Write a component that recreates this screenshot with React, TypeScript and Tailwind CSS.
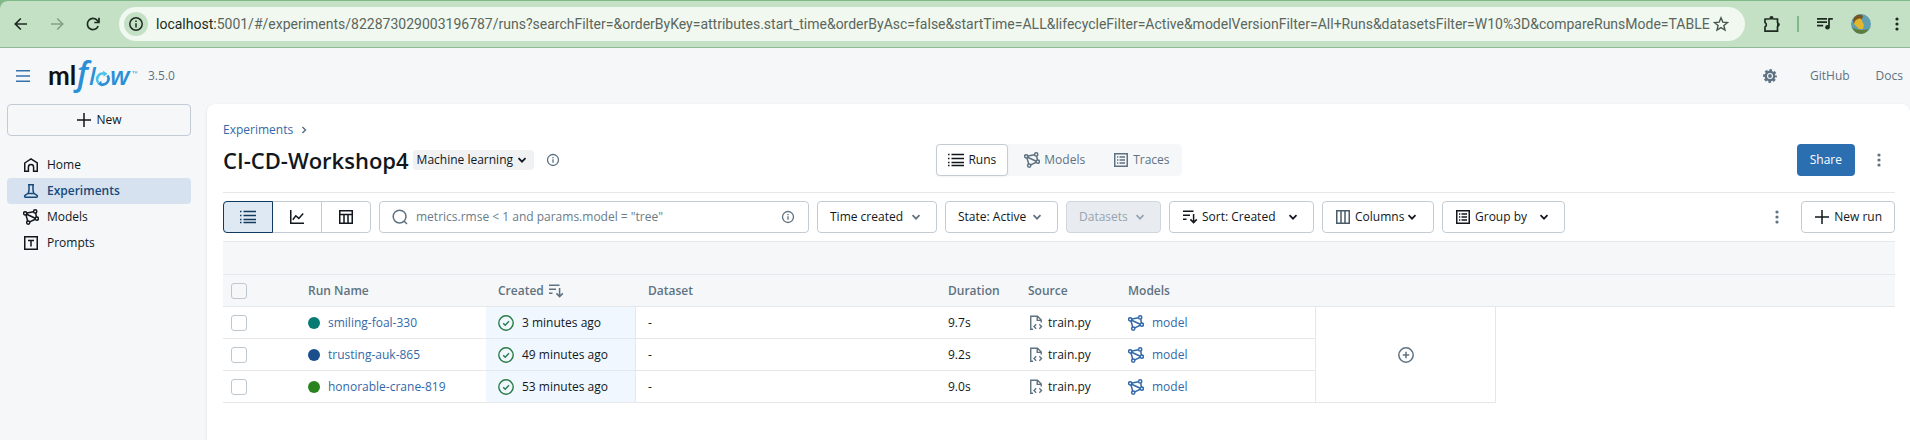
import React from 'react';

type IconProps = { className?: string };

function Svg({ className = 'size-4', children, box = 16 }: { className?: string; children: React.ReactNode; box?: number }) {
  return (
    <svg
      className={`shrink-0 ${className}`}
      viewBox={`0 0 ${box} ${box}`}
      fill="none"
      stroke="currentColor"
      strokeWidth="1.5"
      aria-hidden="true"
    >
      {children}
    </svg>
  );
}

const PlusIcon = ({ className }: IconProps) => (
  <Svg className={className}><path d="M8 1v14M1 8h14" /></Svg>
);
const HomeIcon = () => (
  <Svg><path d="M1.75 6 8 1.8 14.25 6v8.25H10.6V10.2a2.6 2.6 0 0 0-5.2 0v4.05H1.75z" /></Svg>
);
const BeakerIcon = () => (
  <Svg><path d="M5 1.75h6M6 1.75V7.5L5.2 10.3 2 12.3a1.1 1.1 0 0 0 .6 1.95h10.8a1.1 1.1 0 0 0 .6-1.95l-3.2-2L10 7.5V1.75M4.6 10.5h6.8" /></Svg>
);
const ModelsIcon = ({ className }: IconProps) => (
  <Svg className={className}>
    <circle cx="2.2" cy="4.3" r="1.6" />
    <circle cx="12.2" cy="2.4" r="1.6" />
    <circle cx="13.8" cy="9.6" r="1.6" />
    <circle cx="5.2" cy="13.6" r="1.6" />
    <path d="M3.8 4 10.6 2.7M12.6 4l.9 4M12.3 10.3l-5.6 2.6M2.9 5.8l1.8 6.2M3.6 5.2l8.7 4" />
  </Svg>
);
const PromptIcon = () => (
  <Svg><path d="M1.75 1.75h12.5v12.5H1.75zM5 5.4h6M8 5.4v6" /></Svg>
);
const ListIcon = () => (
  <Svg><path d="M3.5 2.5H16M3.5 6.5H16M3.5 10.5H16M3.5 13.5H16M0 2.5h1.5M0 6.5h1.5M0 10.5h1.5M0 13.5h1.5" /></Svg>
);
const ChartIcon = () => (
  <Svg><path d="M1.75 1v13.25H15M3.8 10.8l3-4 3 2.6 4.4-4.8" /></Svg>
);
const TableIcon = () => (
  <Svg><path d="M1.75 1.75h12.5v12.5H1.75zM1.75 5.6h12.5M6 5.6v8.6M10 5.6v8.6" /></Svg>
);
const ColumnsIcon = () => (
  <Svg><path d="M1.75 1.75h12.5v12.5H1.75zM6 1.75v12.5M10 1.75v12.5" /></Svg>
);
const ListBorderIcon = () => (
  <Svg>
    <path d="M1.75 1.75h12.5v12.5H1.75z" />
    <path d="M6.5 5H12M6.5 8H12M6.5 11H12M4 5h1.3M4 8h1.3M4 11h1.3" strokeWidth="1.3" />
  </Svg>
);
const SortIcon = () => (
  <Svg><path d="M1 2.25h10.5M1 6.25h7M1 10.25h3.5M11.6 5v8.6M8.4 10.4l3.2 3.2 3.2-3.2" /></Svg>
);
const ChevronIcon = ({ className }: IconProps) => (
  <Svg className={className}><path d="m4.5 6.2 3.5 3.5 3.5-3.5" strokeWidth="1.7" /></Svg>
);
const InfoIcon = () => (
  <Svg className="size-[14px]">
    <circle cx="8" cy="8" r="6.3" />
    <path d="M8 7.2v4M8 4.6v1.4" />
  </Svg>
);
const FileCodeIcon = () => (
  <Svg>
    <path d="M5 14.25H2.75V1.25H9.5l3.75 3.75V7.5M9.2 1.5v3.9h4M8.2 9.2 6 11.4l2.2 2.3M11.3 9.2l2.2 2.2-2.2 2.3" strokeWidth="1.4" />
  </Svg>
);
const CheckCircleIcon = () => (
  <Svg>
    <circle cx="8" cy="8" r="7.2" strokeWidth="1.4" />
    <path d="m5.2 8.2 2 2 3.8-3.9" strokeWidth="1.4" />
  </Svg>
);
const KebabIcon = ({ className }: IconProps) => (
  <Svg className={className}>
    <g fill="currentColor" stroke="none">
      <circle cx="8" cy="3" r="1.6" />
      <circle cx="8" cy="8" r="1.6" />
      <circle cx="8" cy="13" r="1.6" />
    </g>
  </Svg>
);
const GearIcon = () => (
  <Svg>
    <circle cx="8" cy="8" r="4.2" strokeWidth="2.4" />
    <circle cx="8" cy="8" r="1.9" fill="currentColor" stroke="none" />
    <circle cx="8" cy="8" r="5.8" strokeWidth="2.2" strokeDasharray="2.6 1.955" strokeDashoffset="1.3" />
  </Svg>
);

function MlflowLogo() {
  return (
    <svg className="h-9 w-[92px] overflow-visible" viewBox="0 0 92 36" role="img" aria-label="mlflow">
      <text x="0" y="27" fontFamily="Lato, sans-serif" fontWeight="700" fontSize="26" fill="#111">ml</text>
      <g fontFamily="'Open Sans', sans-serif" fontStyle="italic" fontWeight="600" fill="#2b8fd6">
        <text x="29" y="27" fontSize="32">f</text>
        <text x="41" y="27" fontSize="24">l</text>
        <text x="62" y="27" fontSize="26">w</text>
      </g>
      <g fill="none" strokeWidth="2.6">
        <path d="M50.4 24.6a5.6 5.6 0 0 1 5.4-9" stroke="#4cc3ee" />
        <path d="M59.4 17.6a5.6 5.6 0 0 1-6.4 8.6" stroke="#2b8fd6" />
      </g>
      <path d="m55 12.8 4.6 3-4 3z" fill="#4cc3ee" />
      <path d="m54 28.6-4.6-2.6 3.8-3.2z" fill="#2b8fd6" />
      <path d="M84.5 13.5h2M85.5 13.5v2M87.3 15.5v-2l.8 1 .8-1v2" fill="none" stroke="#2b8fd6" strokeWidth=".5" />
    </svg>
  );
}

function BrowserBar() {
  const url =
    '5001/#/experiments/822873029003196787/runs?searchFilter=&orderByKey=attributes.start_time&orderByAsc=false&startTime=ALL&lifecycleFilter=Active&modelVersionFilter=All+Runs&datasetsFilter=W10%3D&compareRunsMode=TABLE';
  return (
    <div className="bg-[#7fb986] pt-px">
      <div className="flex h-[47px] items-center rounded-tl-lg border-b border-[#8fb894] bg-[#c4e1c5] pl-[13px] pr-[5px] text-[#1f2b21]">
        <button type="button" aria-label="Back" className="mr-5 flex size-4">
          <Svg><path d="M14 8H2.5M7.8 2.5 2.3 8l5.5 5.5" strokeWidth="1.7" /></Svg>
        </button>
        <button type="button" aria-label="Forward" disabled className="mr-5 flex size-4 text-[#86a088]">
          <Svg><path d="M2 8h11.5M8.2 2.5 13.7 8l-5.5 5.5" strokeWidth="1.7" /></Svg>
        </button>
        <button type="button" aria-label="Reload" className="mr-[18px] flex size-4">
          <Svg>
            <path d="M13.2 10A5.6 5.6 0 1 1 12.4 4.5L13.6 6" strokeWidth="1.7" />
            <path d="M14 1.8v4.7H9.3" strokeWidth="1.7" />
          </Svg>
        </button>
        <div className="flex h-[34px] min-w-0 flex-1 items-center rounded-full bg-[#f0f8f0] pl-[5px] pr-4">
          <button type="button" aria-label="Site information" className="mr-2 flex size-6 shrink-0 items-center justify-center rounded-full bg-[#c4e1c5]">
            <Svg>
              <circle cx="8" cy="8" r="6.2" />
              <path d="M8 7.2v4.2M8 4.6v1.5" />
            </Svg>
          </button>
          <label htmlFor="address" className="font-[Roboto,sans-serif] text-[14px] leading-5">localhost:</label>
          <input
            id="address"
            type="text"
            defaultValue={url}
            className="min-w-0 flex-1 bg-transparent font-[Roboto,sans-serif] text-[14px] leading-5 text-[#5b665d] outline-none"
          />
          <button type="button" aria-label="Bookmark" className="flex text-[#4a564c]">
            <Svg><path d="m8 1.8 1.8 4.3 4.7.4-3.6 3 1.1 4.6L8 11.6l-4 2.5 1.1-4.6-3.6-3 4.7-.4z" strokeWidth="1.4" /></Svg>
          </button>
        </div>
        <button type="button" aria-label="Extensions" className="ml-[18px] flex">
          <Svg className="size-[18px]" box={18}>
            <path d="M2 4h4.6M10.4 4h4.1v4.1M14.5 10.9v5.3H2v-4.3a2.5 2.5 0 0 0 0-4.4V3.5" strokeWidth="1.7" />
            <path d="M6.4 4.5V3.2a2.1 2.1 0 0 1 4.2 0v1.3zM14 7.6h1.2a2.1 2.1 0 0 1 0 4.1H14z" fill="currentColor" stroke="none" />
          </Svg>
        </button>
        <span className="ml-4 h-4 w-[2px] bg-[#7fb986]" />
        <button type="button" aria-label="Media controls" className="ml-[18px] flex">
          <Svg>
            <path d="M0 2.8h10M0 6.2h10M0 9.6h6.2M12 10.8V2.8h3.8" strokeWidth="1.7" />
            <circle cx="10.5" cy="11.3" r="2.3" fill="currentColor" stroke="none" />
          </Svg>
        </button>
        <button type="button" aria-label="Profile" className="ml-[18px] flex size-5 overflow-hidden rounded-full">
          <Svg className="size-5" box={20}>
            <g stroke="none">
              <rect width="20" height="20" fill="#5f9fb0" />
              <path d="M2 6C4 0 11-1 12 3l-3 4-6 3z" fill="#7a5320" />
              <path d="M4 7c2-2 4-3 6-2l3 6-1 4-4 0-5-5z" fill="#e0b72c" />
              <path d="M1 13c4 3 8 4 17 2l-5 5H5z" fill="#5f7d3a" />
            </g>
          </Svg>
        </button>
        <button type="button" aria-label="Browser menu" className="ml-[18px] flex">
          <KebabIcon />
        </button>
      </div>
    </div>
  );
}

const navItems = [
  { label: 'Home', icon: <HomeIcon />, active: false },
  { label: 'Experiments', icon: <BeakerIcon />, active: true },
  { label: 'Models', icon: <ModelsIcon />, active: false },
  { label: 'Prompts', icon: <PromptIcon />, active: false },
];

function Sidebar() {
  return (
    <aside className="w-[207px] shrink-0 pl-[7px] pr-4">
      <button type="button" className="flex h-8 w-full items-center justify-center gap-1 rounded border border-[#c3ccd4]">
        <PlusIcon />
        New
      </button>
      <nav className="mt-4 flex flex-col">
        {navItems.map((item) => (
          <a
            key={item.label}
            href={`#/${item.label.toLowerCase()}`}
            className={
              item.active
                ? 'flex h-[26px] items-center gap-2 rounded bg-[#d6e2ef] pl-4 font-semibold text-[#174a7c]'
                : 'flex h-[26px] items-center gap-2 rounded pl-4'
            }
          >
            {item.icon}
            {item.label}
          </a>
        ))}
      </nav>
    </aside>
  );
}

type DropdownProps = {
  label: string;
  text: string;
  icon?: React.ReactNode;
  width: string;
  disabled?: boolean;
  strong?: boolean;
};

function Dropdown({ label, text, icon, width, disabled, strong }: DropdownProps) {
  return (
    <div
      className={`flex h-8 shrink-0 items-center rounded border px-3 ${width} ${
        disabled ? 'border-[#cfd6dd] bg-[#e8ecf0] text-[#97a3af]' : 'border-[#c3ccd4] bg-white'
      }`}
    >
      {icon && <span className="mr-1 flex">{icon}</span>}
      <select aria-label={label} disabled={disabled} className="min-w-0 flex-1 appearance-none bg-transparent opacity-100 outline-none">
        <option>{text}</option>
      </select>
      <ChevronIcon className={strong ? 'size-4' : disabled ? 'size-4 text-[#97a3af]' : 'size-4 text-[#5f7281]'} />
    </div>
  );
}

function TitleRow() {
  return (
    <div className="mt-1 grid grid-cols-[1fr_auto_1fr] items-center border-b border-[#e4e8eb] pb-4">
      <div className="flex items-center">
        <h1 className="text-[22px] leading-7 font-semibold">CI-CD-Workshop4</h1>
        <div className="ml-1 flex h-5 items-center rounded bg-[#f0f1f3] px-1">
          <select aria-label="Experiment type" className="appearance-none bg-transparent outline-none">
            <option>Machine learning</option>
          </select>
          <ChevronIcon />
        </div>
        <button type="button" aria-label="Experiment information" className="ml-3 flex text-[#5f7281]">
          <InfoIcon />
        </button>
      </div>
      <div className="flex h-8 rounded bg-[#f5f7f9] text-[#5f7281]">
        <button type="button" className="flex items-center gap-1 rounded border border-[#c3ccd4] bg-white px-[11px] text-[#11171c] shadow-xs">
          <ListIcon />
          Runs
        </button>
        <button type="button" className="flex items-center gap-1 px-4">
          <ModelsIcon />
          Models
        </button>
        <button type="button" className="flex items-center gap-1 px-3">
          <ListBorderIcon />
          Traces
        </button>
      </div>
      <div className="flex items-center justify-end">
        <button type="button" className="h-8 rounded bg-[#2c6fb1] px-[13px] text-white">Share</button>
        <button type="button" aria-label="More actions" className="ml-2 flex size-8 items-center justify-center text-[#5f7281]">
          <KebabIcon />
        </button>
      </div>
    </div>
  );
}

function Toolbar() {
  return (
    <div className="flex items-center gap-2 py-2">
      <div className="flex h-8 w-[148px] rounded border border-[#c3ccd4]">
        <button type="button" aria-label="List view" className="-my-px -ml-px flex flex-1 items-center justify-center rounded-l border border-[#123a5e] bg-[#dfe9f3] text-[#123a5e]">
          <ListIcon />
        </button>
        <button type="button" aria-label="Chart view" className="flex flex-1 items-center justify-center border-r border-[#c3ccd4]">
          <ChartIcon />
        </button>
        <button type="button" aria-label="Table view" className="flex flex-1 items-center justify-center">
          <TableIcon />
        </button>
      </div>
      <div className="flex h-8 w-[430px] items-center gap-2 rounded border border-[#c3ccd4] pr-[13px] pl-3 text-[#5f7281]">
        <Svg>
          <circle cx="7.6" cy="7.6" r="6.4" />
          <path d="m12 12 3 3" />
        </Svg>
        <input
          type="search"
          aria-label="Search runs"
          placeholder={'metrics.rmse < 1 and params.model = "tree"'}
          className="min-w-0 flex-1 bg-transparent outline-none placeholder:text-[#6b7b89]"
        />
        <InfoIcon />
      </div>
      <Dropdown label="Time" text="Time created" width="w-[120px]" />
      <Dropdown label="State" text="State: Active" width="w-[113px]" />
      <Dropdown label="Datasets" text="Datasets" width="w-[95px]" disabled />
      <Dropdown label="Sort" text="Sort: Created" width="w-[145px]" icon={<SortIcon />} strong />
      <button type="button" aria-haspopup="menu" className="flex h-8 w-[112px] items-center rounded border border-[#c3ccd4] px-3">
        <span className="mr-1 flex text-[#4a5b69]"><ColumnsIcon /></span>
        Columns
        <ChevronIcon />
      </button>
      <Dropdown label="Group by" text="Group by" width="w-[123px]" icon={<ListBorderIcon />} strong />
      <button type="button" aria-label="More run actions" className="ml-auto flex size-8 items-center justify-center text-[#5f7281]">
        <KebabIcon />
      </button>
      <button type="button" className="flex h-8 items-center gap-1 rounded border border-[#c3ccd4] px-3">
        <PlusIcon />
        New run
      </button>
    </div>
  );
}

const runs = [
  { name: 'smiling-foal-330', created: '3 minutes ago', duration: '9.7s', dot: 'bg-[#077a74]' },
  { name: 'trusting-auk-865', created: '49 minutes ago', duration: '9.2s', dot: 'bg-[#1a4f8b]' },
  { name: 'honorable-crane-819', created: '53 minutes ago', duration: '9.0s', dot: 'bg-[#2b831f]' },
];

const checkbox = 'block size-4 appearance-none rounded-[3px] border border-[#bcc7d0] bg-transparent';

function RunsTable() {
  return (
    <table className="w-full table-fixed border-separate border-spacing-0 text-left">
      <colgroup>
        <col className="w-[73px]" />
        <col className="w-[190px]" />
        <col className="w-[150px]" />
        <col className="w-[300px]" />
        <col className="w-20" />
        <col className="w-[100px]" />
        <col className="w-[200px]" />
        <col className="w-[180px]" />
        <col />
      </colgroup>
      <thead className="bg-[#f5f7f9] text-[#5f7281] [&_th]:border-b [&_th]:border-[#e4e8eb] [&_th]:font-semibold">
        <tr className="h-[34px]">
          <th colSpan={9} className="border-t" />
        </tr>
        <tr className="h-8">
          <th className="pl-2"><input type="checkbox" aria-label="Select all runs" className={checkbox} /></th>
          <th className="px-3">Run Name</th>
          <th className="px-3">
            <span className="flex items-center gap-1">Created <SortIcon /></span>
          </th>
          <th className="px-3">Dataset</th>
          <th className="px-3">Duration</th>
          <th className="px-3">Source</th>
          <th className="px-3">Models</th>
          <th />
          <th />
        </tr>
      </thead>
      <tbody className="[&_td]:border-[#e4e8eb]">
        {runs.map((run, index) => (
          <tr key={run.name} className="h-8">
            <td className="border-b pl-2"><input type="checkbox" aria-label={`Select ${run.name}`} className={checkbox} /></td>
            <td className="border-b px-3">
              <a href={`#/runs/${run.name}`} className="flex items-center gap-2 text-[#3269a8]">
                <span className={`size-3 rounded-full ${run.dot}`} />
                {run.name}
              </a>
            </td>
            <td className="border-r border-b bg-[#f0f7ff] px-3">
              <span className="flex items-center gap-2">
                <span className="flex text-[#277c43]"><CheckCircleIcon /></span>
                {run.created}
              </span>
            </td>
            <td className="border-b px-3">-</td>
            <td className="border-b px-3">{run.duration}</td>
            <td className="border-b px-3">
              <span className="flex items-center gap-1">
                <span className="flex text-[#5f7281]"><FileCodeIcon /></span>
                train.py
              </span>
            </td>
            <td className="border-r border-b px-3">
              <a href={`#/models/${run.name}`} className="flex items-center gap-2 text-[#3269a8]">
                <ModelsIcon />
                model
              </a>
            </td>
            {index === 0 && (
              <td rowSpan={3} className="border-r border-b">
                <button type="button" aria-label="Show more columns" className="mx-auto flex text-[#5f7281]">
                  <Svg>
                    <circle cx="8" cy="8" r="7.2" />
                    <path d="M8 4.8v6.4M4.8 8h6.4" />
                  </Svg>
                </button>
              </td>
            )}
          </tr>
        ))}
      </tbody>
    </table>
  );
}

export default function App() {
  return (
    <div className="flex min-h-screen flex-col bg-[#f5f7f9] font-['Open_Sans','Noto_Sans',sans-serif] text-[12px] leading-5 text-[#11171c]">
      <BrowserBar />
      <header className="flex h-14 items-center pr-[7px] pl-4 text-[#5f7281]">
        <button type="button" aria-label="Toggle sidebar" className="mr-[18px] flex text-[#3672ad]">
          <Svg className="size-[14px]"><path d="M0 2h16M0 8h16M0 14h16" strokeWidth="1.8" /></Svg>
        </button>
        <MlflowLogo />
        <span className="ml-2">3.5.0</span>
        <button type="button" aria-label="Settings" className="ml-auto flex"><GearIcon /></button>
        <a href="#github" className="ml-8">GitHub</a>
        <a href="#docs" className="ml-[26px]">Docs</a>
      </header>
      <div className="flex flex-1">
        <Sidebar />
        <main className="min-w-0 flex-1 rounded-t-lg bg-white px-4 pt-4 pr-[15px] shadow-sm">
          <div className="flex items-center gap-1">
            <a href="#/experiments" className="text-[#3269a8]">Experiments</a>
            <ChevronIcon className="size-[14px] -rotate-90 text-[#5f7281]" />
          </div>
          <TitleRow />
          <Toolbar />
          <RunsTable />
        </main>
      </div>
    </div>
  );
}
